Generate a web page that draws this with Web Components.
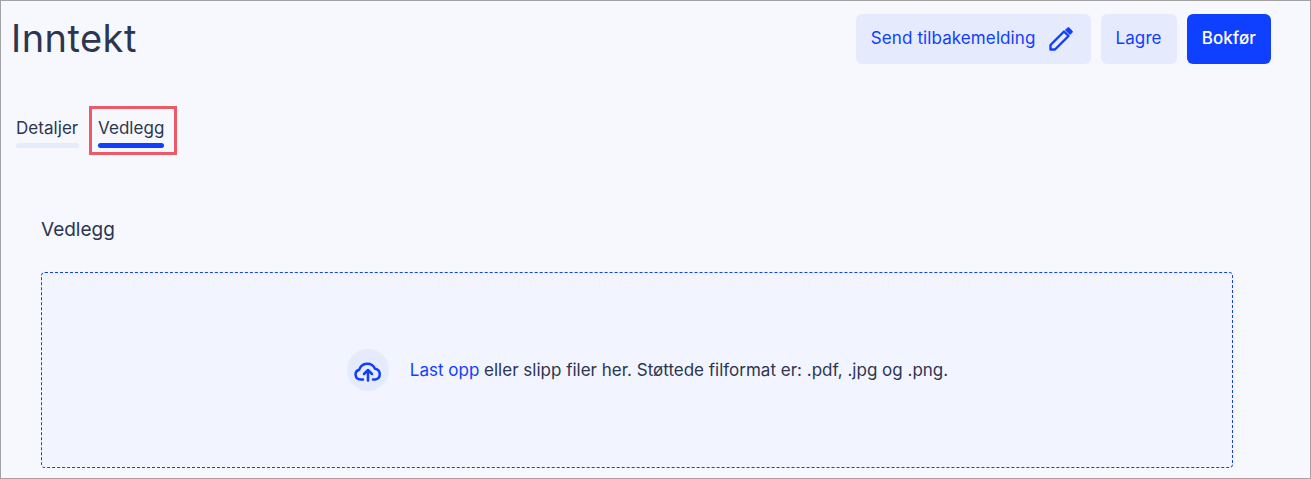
<!DOCTYPE html>
<html lang="nb"><head><meta charset="utf-8"><title>Inntekt</title>
<style>html,body{margin:0;padding:0;background:#fff}</style></head>
<body>
<app-page>
  <page-header slot="header" title="Inntekt">
    <action-button kind="soft" has-icon>Send tilbakemelding<svg slot="icon" width="24" height="24" viewBox="0 0 24 24" fill="none" stroke="#0f3fff" stroke-width="2.400" stroke-linejoin="round"><path d="M1.500 22.500V18L15 4.500 19.500 9 6 22.500z"/><path fill="#0f3fff" stroke-width="1" d="M16.500 3l2-2a1.200 1.200 0 0 1 1.700 0l2.800 2.800a1.200 1.200 0 0 1 0 1.700l-2 2z"/></svg></action-button>
    <action-button kind="soft">Lagre</action-button>
    <action-button kind="solid">Bokfør</action-button>
  </page-header>
  <tab-bar slot="tabs">
    <tab-item style="min-width:63px">Detaljer</tab-item>
    <tab-item active highlighted>Vedlegg</tab-item>
  </tab-bar>
  <attachment-panel heading="Vedlegg">
    <span>eller slipp filer her. Støttede filformat er: .pdf, .jpg og .png.</span>
  </attachment-panel>
</app-page>
<script>
const FONT = '"Inter","Noto Sans",sans-serif';
function def(name, css, html) {
  customElements.define(name, class extends HTMLElement {
    constructor() {
      super();
      this.attachShadow({mode:'open'}).innerHTML = `<style>${css}</style>` + html;
    }
    connectedCallback() {
      this.shadowRoot.querySelectorAll('[data-attr]').forEach(e => { e.textContent = this.getAttribute(e.dataset.attr) || ''; });
    }
  });
}
def('app-page', `
  :host{display:flex;flex-direction:column;box-sizing:border-box;width:1311px;height:479px;overflow:hidden;
    background:#f7f8fd;border:1px solid #a3a3a6;font-family:${FONT};color:#2c3650}
`, `<slot name="header"></slot><slot name="tabs"></slot><slot></slot>`);
def('page-header', `
  :host{display:flex;justify-content:space-between;align-items:flex-start;padding:13px 39px 0 10px;height:91px;box-sizing:border-box;flex:none}
  h1{margin:0;font-size:38px;line-height:48px;font-weight:400;color:#2c3650;letter-spacing:.45px}
  .a{display:flex;gap:10px}
`, `<h1 data-attr="title"></h1><div class="a"><slot></slot></div>`);
def('action-button', `
  :host{display:inline-flex;align-items:center;height:50px;box-sizing:border-box;padding:0 15px;border-radius:6px;
    font-size:17px;font-weight:400;letter-spacing:.1px;gap:13px;background:#e6eafd;color:#0f3fff}
  :host([has-icon]){padding-right:18px}
  :host([kind=solid]){background:#0f3fff;color:#fff;font-weight:500}
  .t{margin-bottom:2px}
  ::slotted(svg){display:block}
`, `<span class="t"><slot></slot></span><slot name="icon"></slot>`);
def('tab-bar', `
  :host{display:flex;align-items:flex-start;gap:19px;padding:24px 0 0 15px;flex:none;height:69px;box-sizing:border-box}
`, `<slot></slot>`);
def('tab-item', `
  :host{display:block;position:relative;font-size:17px;line-height:24px;letter-spacing:.05px;color:#2c3650}
  .t{display:block;padding-bottom:3px}
  .u{display:block;height:5px;border-radius:3px;background:#e6eafd}
  :host([active]) .u{background:#0f3fff}
  :host([highlighted])::after{content:"";position:absolute;left:-9px;right:-13px;top:-10px;bottom:-7px;border:3px solid #ec5a68;pointer-events:none}
`, `<span class="t"><slot></slot></span><span class="u"></span>`);
def('attachment-panel', `
  :host{display:block;padding:0 77px 0 40px;flex:1}
  h2{margin:0 0 29px;font-size:19px;line-height:26px;font-weight:400;color:#2c3650;padding-top:56px}
  .z{height:196px;box-sizing:border-box;border:1px dashed #0f3fff;border-radius:4px;background:#f2f4ff;display:flex;align-items:center;justify-content:center;
    font-size:17px;color:#2c3650;gap:21px;padding-left:21px}
  .c{width:42px;height:42px;border-radius:50%;background:#e6eafd;display:flex;align-items:center;justify-content:center}
  .l{color:#0f3fff}
`, `<h2 data-attr="heading"></h2><div class="z"><span class="c"><svg width="28" height="28" viewBox="0 0 28 28" fill="none" stroke="#0f3fff" stroke-width="2.500" stroke-linecap="round" stroke-linejoin="round"><path d="M9 23.500H6.500a5 5 0 0 1-1.300-9.800A8.500 8.500 0 0 1 21 12.700a5.500 5.500 0 0 1 .5 10.800H19"/><path d="M14 24.500V14.500"/><path d="M10 18l4-4 4 4"/></svg></span><div><span class="l">Last opp</span> <slot></slot></div></div>`);
</script>
</body></html>
